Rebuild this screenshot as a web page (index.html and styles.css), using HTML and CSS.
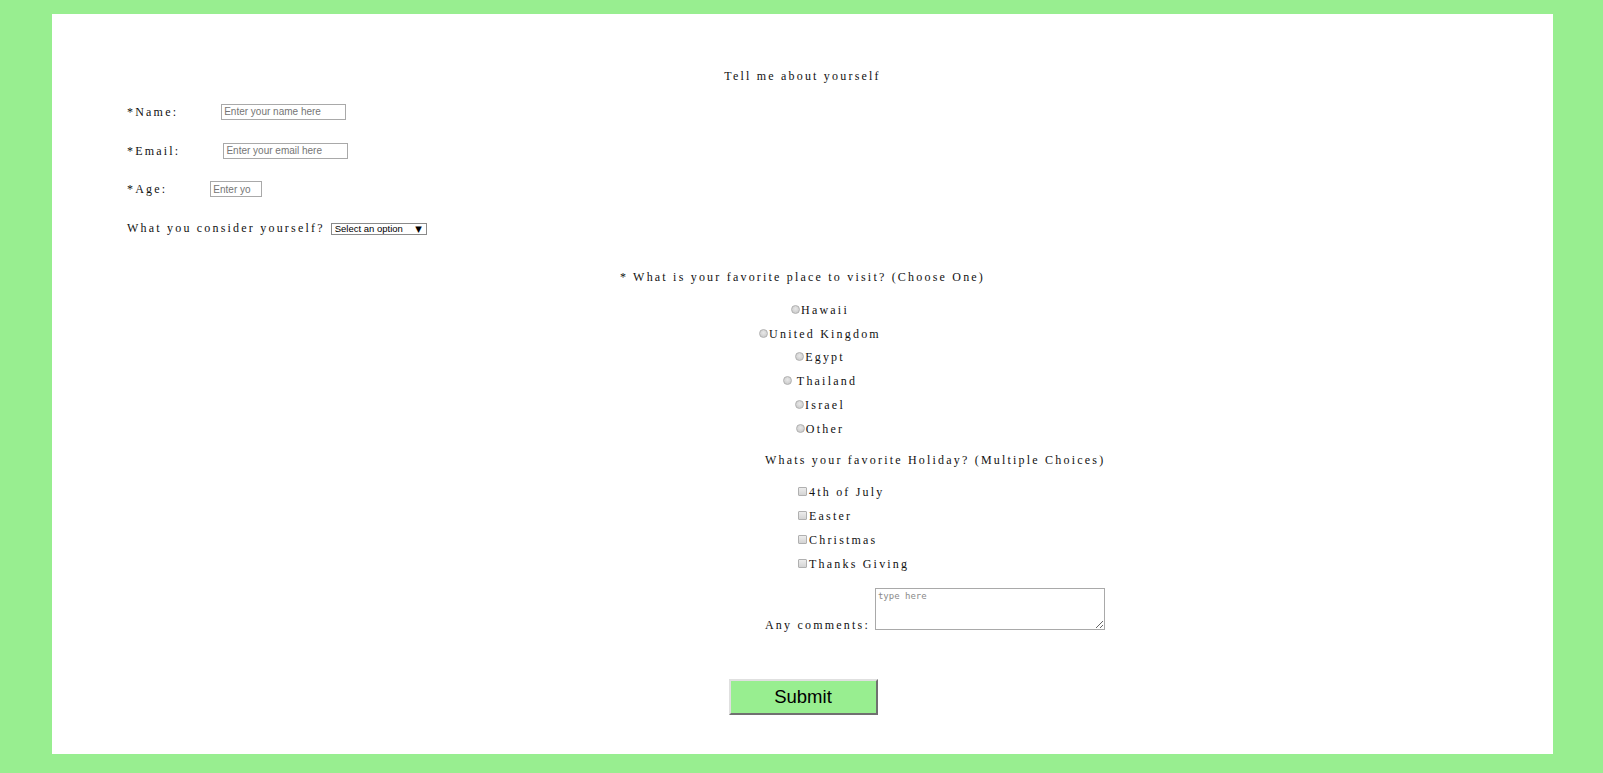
FILE: index.html
```html
<!DOCTYPE html>
<html>
<head>
<meta charset="utf-8">
<title>Survey</title>
<link rel="stylesheet" href="styles.css">
</head>
<body>
<div class="page">
  <form class="survey">
    <div class="title">Tell me about yourself</div>
    <div class="info">
      <div class="row"><span class="label">*Name:</span><input class="text-input name-input" type="text" placeholder="Enter your name here"></div>
      <div class="row"><span class="label">*Email:</span><input class="text-input email-input" type="text" placeholder="Enter your email here"></div>
      <div class="row"><span class="label">*Age:</span><input class="text-input age-input" type="text" placeholder="Enter yo"></div>
      <div class="row"><span class="label">What you consider yourself?</span><span class="select-wrap"><select class="select"><option>Select an option</option></select></span></div>
    </div>
    <div class="places-title">* What is your favorite place to visit? (Choose One)</div>
    <div class="places">
      <div class="choice"><input class="radio" type="radio" name="place">Hawaii</div>
      <div class="choice"><input class="radio" type="radio" name="place">United Kingdom</div>
      <div class="choice"><input class="radio" type="radio" name="place">Egypt</div>
      <div class="choice"><input class="radio radio-spaced" type="radio" name="place">Thailand</div>
      <div class="choice"><input class="radio" type="radio" name="place">Israel</div>
      <div class="choice"><input class="radio" type="radio" name="place">Other</div>
    </div>
    <div class="holidays">
      <div class="holidays-title">Whats your favorite Holiday? (Multiple Choices)</div>
      <div class="checks">
        <div class="check-row"><input class="check" type="checkbox">4th of July</div>
        <div class="check-row"><input class="check" type="checkbox">Easter</div>
        <div class="check-row"><input class="check" type="checkbox">Christmas</div>
        <div class="check-row"><input class="check" type="checkbox">Thanks Giving</div>
      </div>
      <div class="comments"><span class="comments-label">Any comments:</span><textarea class="textarea" placeholder="type here"></textarea></div>
    </div>
    <div class="actions"><button class="submit" type="button">Submit</button></div>
  </form>
</div>
</body>
</html>
```
FILE: styles.css
```css
html, body {
  margin: 0;
  padding: 0;
}
body {
  background: #98ee90;
  padding: 14px 50px 19px 52px;
  font-family: "Liberation Serif", "Times New Roman", serif;
  font-size: 12px;
  letter-spacing: 2.2px;
  color: #111;
}
.page {
  background: #ffffff;
  height: 740px;
  box-sizing: border-box;
  padding-top: 54px;
}
.survey {
  display: flex;
  flex-direction: column;
}
.title {
  line-height: 16px;
  text-align: center;
}
.info {
  margin-top: 8.5px;
  padding-left: 75px;
}
.row {
  height: 38.7px;
  display: flex;
  align-items: center;
  line-height: 16px;
}
.text-input {
  box-sizing: border-box;
  height: 16px;
  border: 1px solid #a9a9a9;
  padding: 0 2px;
  font-family: "Liberation Sans", Arial, sans-serif;
  font-size: 10px;
  letter-spacing: 0;
  outline: none;
}
.text-input::placeholder {
  color: #757575;
}
.name-input {
  width: 125px;
  margin-left: 43px;
}
.email-input {
  width: 125px;
  margin-left: 43px;
}
.age-input {
  width: 52px;
  margin-left: 43px;
}
.select-wrap {
  position: relative;
  display: inline-block;
  margin-left: 6px;
  margin-top: 2px;
}
.select {
  appearance: none;
  -webkit-appearance: none;
  box-sizing: border-box;
  width: 96px;
  height: 12px;
  border: 1px solid #8a8a8a;
  border-radius: 0;
  background: #fff;
  padding: 0 0 0 3px;
  font-family: "Liberation Sans", Arial, sans-serif;
  font-size: 9.5px;
  line-height: 10px;
  letter-spacing: 0;
  color: #000;
  display: block;
}
.select-wrap::after {
  content: "\25BC";
  position: absolute;
  right: 5px;
  top: 1px;
  font-family: "DejaVu Sans", sans-serif;
  font-size: 8.5px;
  line-height: 10px;
  letter-spacing: 0;
  color: #000;
  pointer-events: none;
}
.places-title {
  margin-top: 21.5px;
  line-height: 16px;
  text-align: center;
}
.places {
  margin-top: 13.2px;
  padding-left: 35px;
}
.choice {
  height: 23.8px;
  line-height: 16px;
  display: flex;
  align-items: center;
  justify-content: center;
  white-space: pre;
}
.radio {
  appearance: none;
  -webkit-appearance: none;
  width: 9px;
  height: 9px;
  margin: 0 1px 1px 0;
  border: 1px solid #b0b0b0;
  border-radius: 50%;
  background: radial-gradient(circle at 50% 40%, #e8e8e8 0%, #cfcfcf 70%);
  box-sizing: border-box;
}
.radio-spaced {
  margin-right: 5px;
}
.holidays {
  margin-top: 11px;
  margin-left: 713px;
}
.holidays-title {
  line-height: 16px;
}
.checks {
  margin-top: 12.75px;
  padding-left: 33px;
}
.check-row {
  height: 23.9px;
  line-height: 16px;
  display: flex;
  align-items: center;
}
.check {
  appearance: none;
  -webkit-appearance: none;
  width: 9px;
  height: 9px;
  margin: 0 2px 1px 0;
  border: 1px solid #b0b0b0;
  border-radius: 1px;
  background: linear-gradient(#ececec, #d4d4d4);
  box-sizing: border-box;
}
.comments {
  margin-top: 11.65px;
  display: flex;
  align-items: flex-end;
}
.comments-label {
  line-height: 16px;
  margin-bottom: -3px;
  margin-right: 5px;
}
.textarea {
  box-sizing: border-box;
  width: 230px;
  height: 42px;
  border: 1px solid #a9a9a9;
  padding: 2px;
  margin: 0;
  font-family: "DejaVu Sans Mono", monospace;
  font-size: 9px;
  letter-spacing: 0;
  outline: none;
}
.textarea::placeholder {
  color: #8a8a8a;
}
.actions {
  margin-top: 49px;
  display: flex;
  justify-content: center;
}
.submit {
  box-sizing: border-box;
  width: 149px;
  height: 36px;
  margin-left: 1px;
  background: #98ee90;
  border: 2px solid;
  border-color: #e0e0e0 #707070 #707070 #e0e0e0;
  font-family: "Liberation Sans", Arial, sans-serif;
  font-size: 18.5px;
  letter-spacing: 0;
  color: #000;
  padding: 0;
}
```
